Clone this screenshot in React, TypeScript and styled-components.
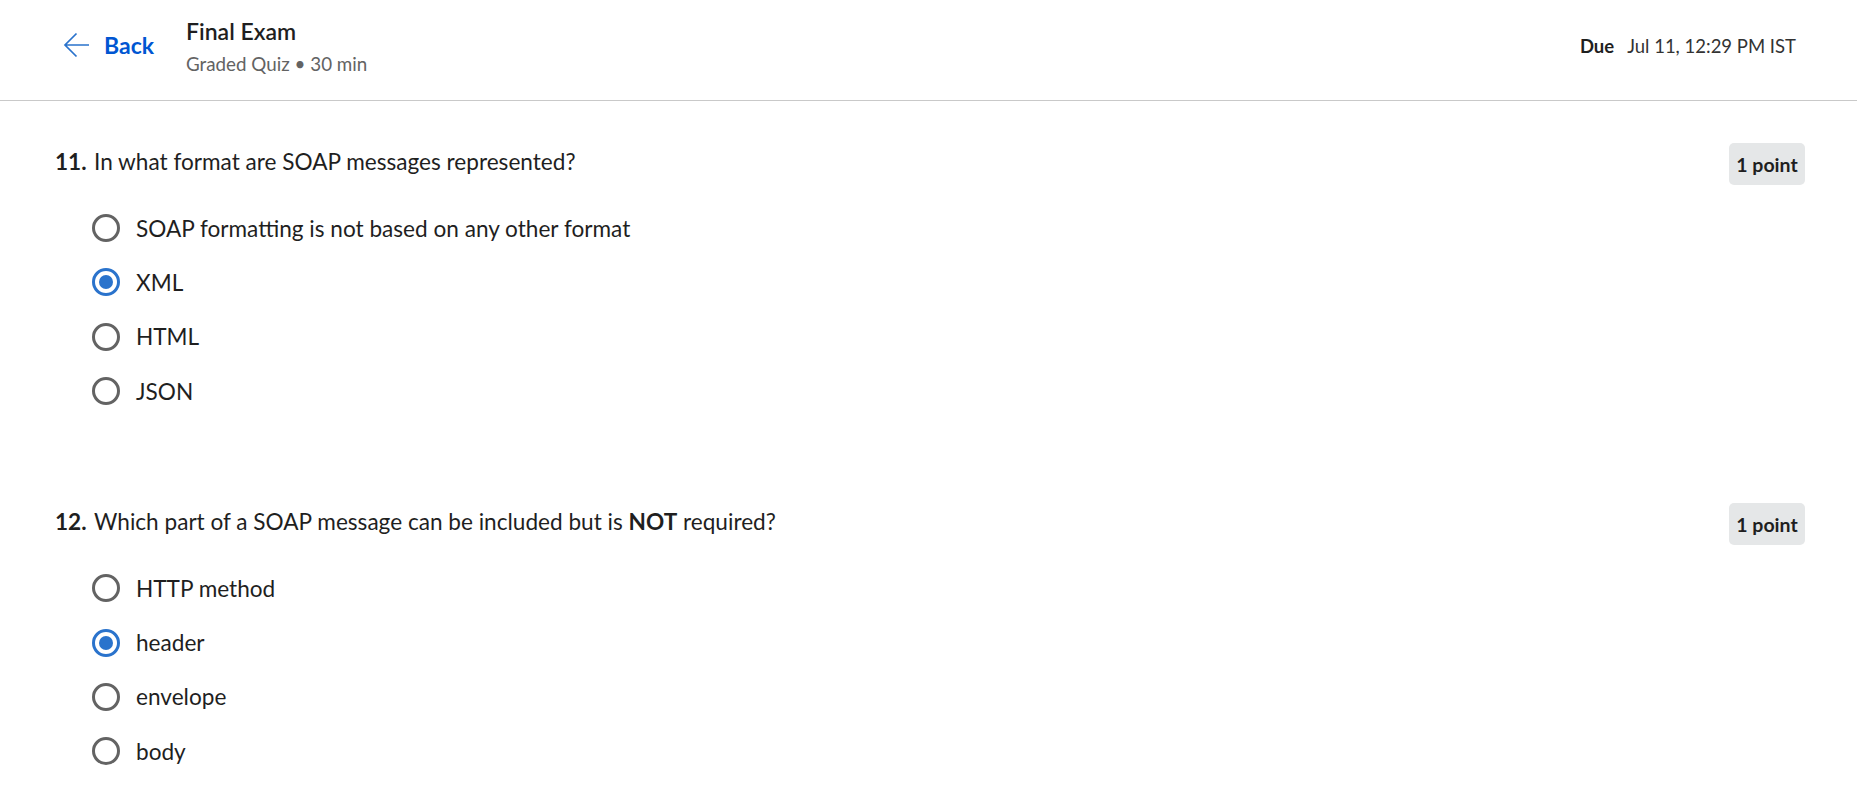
import React from "react";
import styled, { createGlobalStyle } from "styled-components";

const FONT = `Lato, "Noto Sans", Arial, sans-serif`;

const Global = createGlobalStyle`
  html, body { margin: 0; padding: 0; background: #ffffff; }
  body { font-family: ${FONT}; color: #1f1f1f; }
`;

const Page = styled.div`
  width: 100%;
  min-height: 793px;
  background: #fff;
`;

const Header = styled.header`
  height: 101px;
  border-bottom: 1px solid #c9c9c9;
  display: flex;
  align-items: center;
  padding: 0 61px 0 63px;
  box-sizing: border-box;
`;

const BackLink = styled.a`
  display: flex;
  align-items: center;
  gap: 14px;
  color: #0056d2;
  font-weight: 700;
  font-size: 23px;
  text-decoration: none;
  margin-top: -10px;
  cursor: pointer;
`;

const TitleBlock = styled.div`
  display: flex;
  flex-direction: column;
  margin-left: 32px;
  margin-top: -6px;
  gap: 8px;
`;

const Title = styled.div`
  font-size: 23px;
  font-weight: 600;
  color: #1f1f1f;
  line-height: 26px;
`;

const Subtitle = styled.div`
  font-size: 18.8px;
  color: #636363;
  line-height: 24px;
`;

const Due = styled.div`
  margin-left: auto;
  font-size: 18.5px;
  color: #333;
  display: flex;
  gap: 13px;
  margin-top: -8px;
  b { font-weight: 700; color: #1f1f1f; }
`;

const Main = styled.main`
  padding: 42px 52px 0 55px;
  display: flex;
  flex-direction: column;
  gap: 85px;
`;

const Question = styled.section`
  display: flex;
  flex-direction: column;
`;

const QuestionRow = styled.div`
  display: flex;
  align-items: center;
  height: 42px;
  font-size: 22.6px;
`;

const QuestionText = styled.div`
  flex: 1;
  display: flex;
  align-items: baseline;
  margin-top: -6px;
`;

const Num = styled.span`
  font-weight: 700;
  width: 39px;
  flex: none;
`;

const Prompt = styled.span`
  flex: 1;
  b { font-weight: 700; }
`;

const Points = styled.span`
  flex: none;
  width: 76px;
  height: 42px;
  border-radius: 5px;
  background: #e5e7e8;
  display: flex;
  align-items: center;
  justify-content: center;
  font-weight: 700;
  font-size: 19.5px;
  color: #1f1f1f;
`;

const Options = styled.div`
  display: flex;
  flex-direction: column;
  margin-top: 16px;
  padding-left: 37px;
`;

const Option = styled.label`
  display: flex;
  align-items: center;
  height: 54.3px;
  gap: 16px;
  font-size: 22.6px;
  color: #1f1f1f;
  cursor: pointer;
`;

const Radio = styled.span<{ $checked?: boolean }>`
  width: 28px;
  height: 28px;
  box-sizing: border-box;
  border-radius: 50%;
  border: 3px solid ${(p) => (p.$checked ? "#2a73cc" : "#636363")};
  display: flex;
  align-items: center;
  justify-content: center;
  flex: none;
  &::after {
    content: "";
    width: 14px;
    height: 14px;
    border-radius: 50%;
    background: ${(p) => (p.$checked ? "#2a73cc" : "transparent")};
  }
`;

const ArrowIcon = () => (
  <svg width="27" height="26" viewBox="0 0 27 26" fill="none">
    <path d="M26 13H2.5M13.5 1.5L2 13l11.5 11.5" stroke="#2a73cc" strokeWidth="1.7" />
  </svg>
);

type Q = { n: number; text: React.ReactNode; options: string[]; selected: number };

const questions: Q[] = [
  {
    n: 11,
    text: "In what format are SOAP messages represented?",
    options: ["SOAP formatting is not based on any other format", "XML", "HTML", "JSON"],
    selected: 1,
  },
  {
    n: 12,
    text: (
      <>
        Which part of a SOAP message can be included but is <b>NOT</b> required?
      </>
    ),
    options: ["HTTP method", "header", "envelope", "body"],
    selected: 1,
  },
];

export default function App() {
  return (
    <Page>
      <Global />
      <Header>
        <BackLink>
          <ArrowIcon />
          Back
        </BackLink>
        <TitleBlock>
          <Title>Final Exam</Title>
          <Subtitle>Graded Quiz • 30 min</Subtitle>
        </TitleBlock>
        <Due>
          <b>Due</b>
          <span>Jul 11, 12:29 PM IST</span>
        </Due>
      </Header>
      <Main>
        {questions.map((q) => (
          <Question key={q.n}>
            <QuestionRow>
              <QuestionText>
                <Num>{q.n}.</Num>
                <Prompt>{q.text}</Prompt>
              </QuestionText>
              <Points>1 point</Points>
            </QuestionRow>
            <Options>
              {q.options.map((o, i) => (
                <Option key={o}>
                  <Radio $checked={i === q.selected} />
                  {o}
                </Option>
              ))}
            </Options>
          </Question>
        ))}
      </Main>
    </Page>
  );
}
